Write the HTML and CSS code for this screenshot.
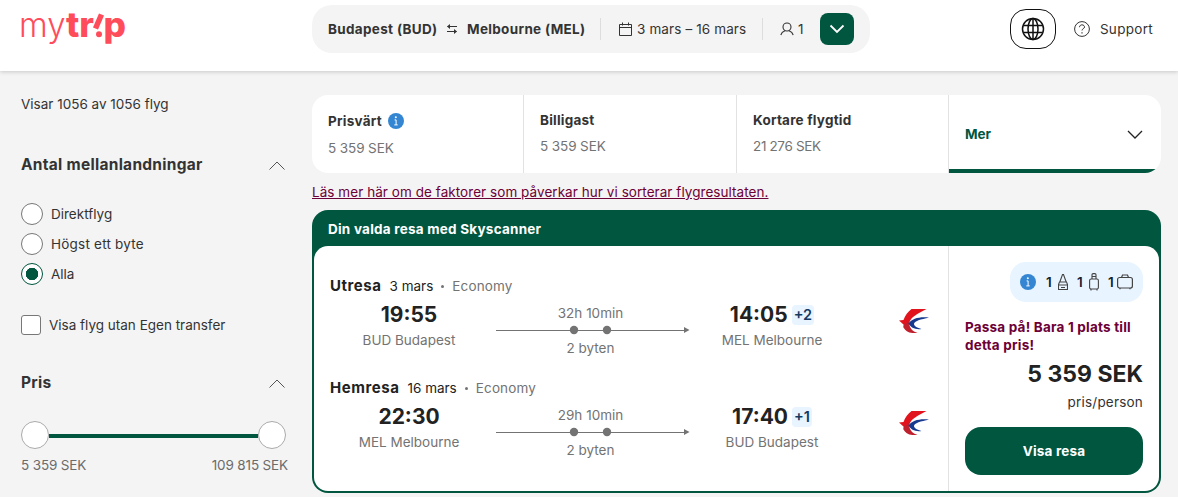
FILE: index.html
```html
<!DOCTYPE html>
<html lang="sv">
<head>
  <meta charset="UTF-8">
  <meta name="viewport" content="width=device-width, initial-scale=1.0">
  <title>Mytrip</title>
  <link rel="stylesheet" href="styles.css">
</head>
<body>

  <svg class="sprite" width="0" height="0">
    <symbol id="info" viewBox="0 0 16 16">
      <circle cx="8" cy="8" r="8" fill="#3486d2"/>
      <circle cx="7.8" cy="4.3" r="1" fill="#fff"/>
      <path d="M6.6 6.9h1.500v4.800M6.300 11.900h3.400" fill="none" stroke="#fff" stroke-width="1"/>
    </symbol>
    <symbol id="china-eastern" viewBox="0 0 30 24">
      <path d="M12.500 0H27.500L21 3.500C16 6 10.500 10 10 15L4.500 18.500 5 16 0 11.500 4.500 11C6 6.500 9 2.500 12.500 0z" fill="#e1141e"/>
      <path d="M4.500 16L10.200 12c-.7 6 3 10.500 8.300 11.700C11 25 6.500 22.500 4.500 18.500z" fill="#c01f2c"/>
      <path d="M30 8.700C21 7.500 13 9.500 9.500 14.500c2 4 7 6.500 13 5.500-4-1-7.500-2.800-7.500-5C15 12.200 22 10 30 8.700z" fill="#173a8f"/>
    </symbol>
    <symbol id="route" viewBox="0 0 194 10">
      <path d="M0 5.500H189" stroke="#737373" stroke-width="1"/>
      <circle cx="78" cy="5" r="4.200" fill="#737373"/>
      <circle cx="111" cy="5" r="4.200" fill="#737373"/>
      <path d="M188 2l5.500 3-5.500 3z" fill="#737373"/>
    </symbol>
  </svg>

  <header class="header">
    <svg class="logo" width="106" height="36" viewBox="0 0 106 36">
      <text class="logo-light" x="-2" y="26" textLength="46.500" lengthAdjust="spacingAndGlyphs">my</text>
      <text class="logo-bold" x="45" y="26" textLength="28" lengthAdjust="spacingAndGlyphs">tr</text>
      <path class="logo-mark" d="M80.500 3.500L74.500 17.500"/>
      <circle class="logo-dot" cx="78" cy="23.300" r="3"/>
      <text class="logo-bold" x="82.500" y="26" textLength="22.500" lengthAdjust="spacingAndGlyphs">p</text>
    </svg>

    <div class="search">
      <b class="city from">Budapest (BUD)</b>
      <svg width="12" height="12" viewBox="0 0 12 12" fill="none" stroke="#333" stroke-width="1.100"><path d="M11 3.500H1.500M1 8.500h9.500"/><path d="M4 1L1 3.500 4 6zM8 6l3 2.500L8 11z" fill="#333" stroke="none"/></svg>
      <b class="city to">Melbourne (MEL)</b>
      <div class="dates">
        <svg width="13" height="14" viewBox="0 0 13 14" fill="none" stroke="#333" stroke-width="1"><path d="M.5 2.500h12v11H.5zM.5 5.500h12M3.500 .5v3M9.500 .5v3"/></svg>
        <span>3 mars – 16 mars</span>
      </div>
      <div class="people">
        <svg width="14" height="14" viewBox="0 0 14 14" fill="none" stroke="#333" stroke-width="1.100"><circle cx="7" cy="5" r="4"/><path d="M.8 13C1.500 10.500 3 9.500 5 8.800M13.200 13C12.500 10.500 11 9.500 9 8.800"/></svg>
        <span>1</span>
      </div>
      <button class="search-btn">
        <svg width="16" height="10" viewBox="0 0 16 10" fill="none" stroke="#fff" stroke-width="1.800"><path d="M1.500 1.500L8 8l6.500-6.500"/></svg>
      </button>
    </div>

    <button class="globe">
      <svg width="24" height="24" viewBox="0 0 24 24" fill="none" stroke="#111" stroke-width="1.500"><circle cx="12" cy="12" r="10.500"/><ellipse cx="12" cy="12" rx="5" ry="10.500"/><path d="M12 1.500v21M2.500 8.500h19M2.500 15.500h19"/></svg>
    </button>
    <a class="support">
      <svg width="16" height="16" viewBox="0 0 16 16" fill="none" stroke="#333" stroke-width="1"><circle cx="8" cy="8" r="7.400"/><path d="M5.500 6.200C5.500 3 10.500 3.200 10.500 6c0 1.800-2.500 1.700-2.500 3.500"/><path d="M8 11.200v1.200" stroke-width="1.200"/></svg>
      <span>Support</span>
    </a>
  </header>

  <div class="page">
    <aside class="sidebar">
      <p class="count">Visar 1056 av 1056 flyg</p>

      <div class="filter-head">
        <h2>Antal mellanlandningar</h2>
        <svg width="16" height="9" viewBox="0 0 16 9" fill="none" stroke="#555" stroke-width="1"><path d="M.5 8.500L8 1l7.500 7.500"/></svg>
      </div>
      <label class="option"><span class="radio"></span><span>Direktflyg</span></label>
      <label class="option"><span class="radio"></span><span class="one-stop">Högst ett byte</span></label>
      <label class="option"><span class="radio checked"></span><span>Alla</span></label>
      <label class="option check-option"><span class="checkbox"></span><span>Visa flyg utan Egen transfer</span></label>

      <div class="filter-head price-head">
        <h2>Pris</h2>
        <svg width="16" height="9" viewBox="0 0 16 9" fill="none" stroke="#555" stroke-width="1"><path d="M.5 8.500L8 1l7.500 7.500"/></svg>
      </div>
      <div class="slider">
        <span class="handle"></span>
        <span class="track"></span>
        <span class="handle"></span>
      </div>
      <div class="range">
        <span>5 359 SEK</span>
        <span>109 815 SEK</span>
      </div>
    </aside>

    <main class="main">
      <div class="tabs">
        <div class="tab">
          <div class="tab-title with-info">Prisvärt <svg width="16" height="16"><use href="#info"/></svg></div>
          <div class="tab-price">5 359 SEK</div>
        </div>
        <div class="tab">
          <div class="tab-title">Billigast</div>
          <div class="tab-price">5 359 SEK</div>
        </div>
        <div class="tab">
          <div class="tab-title">Kortare flygtid</div>
          <div class="tab-price narrow">21 276 SEK</div>
        </div>
        <div class="tab more">
          <span>Mer</span>
          <svg width="16" height="9" viewBox="0 0 16 9" fill="none" stroke="#222" stroke-width="1.300"><path d="M1 1l7 7 7-7"/></svg>
        </div>
      </div>

      <a class="sort-link">Läs mer här om de faktorer som påverkar hur vi sorterar flygresultaten.</a>

      <section class="trip">
        <div class="trip-head">Din valda resa med Skyscanner</div>
        <div class="trip-body">
          <div class="legs">
            <div class="leg">
              <div class="leg-head"><b>Utresa</b><span>3 mars</span><i></i><span class="cabin">Economy</span></div>
              <div class="leg-row">
                <div class="stop"><strong>19:55</strong><span>BUD Budapest</span></div>
                <div class="route"><span>32h 10min</span><svg width="194" height="10"><use href="#route"/></svg><span>2 byten</span></div>
                <div class="stop arrive"><div><strong>14:05</strong><em>+2</em></div><span>MEL Melbourne</span></div>
                <svg class="airline" width="30" height="24"><use href="#china-eastern"/></svg>
              </div>
            </div>
            <div class="leg">
              <div class="leg-head"><b>Hemresa</b><span>16 mars</span><i></i><span class="cabin">Economy</span></div>
              <div class="leg-row">
                <div class="stop"><strong>22:30</strong><span>MEL Melbourne</span></div>
                <div class="route"><span>29h 10min</span><svg width="194" height="10"><use href="#route"/></svg><span>2 byten</span></div>
                <div class="stop arrive"><div><strong>17:40</strong><em>+1</em></div><span>BUD Budapest</span></div>
                <svg class="airline" width="30" height="24"><use href="#china-eastern"/></svg>
              </div>
            </div>
          </div>

          <div class="offer">
            <div class="bags">
              <svg class="bag-info" width="16" height="16"><use href="#info"/></svg>
              <span>1</span>
              <svg class="small-bag" width="10" height="18" viewBox="0 0 10 18" fill="none" stroke="#444" stroke-width="1.100"><path d="M1.800 9L4.500 1.500h1L8.200 9M1.500 9h7l1 2.500v5h-9v-5zM.5 12h9M3 14.500h4"/></svg>
              <span>1</span>
              <svg class="small-bag" width="10" height="18" viewBox="0 0 10 18" fill="none" stroke="#444" stroke-width="1.100"><path d="M3 6V1.800c0-.7.5-1.200 1.200-1.200h1.600C6.500.6 7 1.100 7 1.800V6M3 3.500h4"/><rect x=".6" y="6" width="8.800" height="10" rx="1.500"/><path d="M2 17.500V16M8 17.500V16"/></svg>
              <span>1</span>
              <svg class="suitcase" width="16" height="16" viewBox="0 0 16 16" fill="none" stroke="#444" stroke-width="1.200"><path d="M4.500 3.500L5.500 1h5l1 2.500M3 15.300V14M13 15.300V14"/><rect x=".6" y="3.500" width="14.800" height="10.500" rx="2"/></svg>
            </div>
            <p class="hurry">Passa på! Bara 1 plats till detta pris!</p>
            <div class="price">5 359 SEK</div>
            <div class="per">pris/person</div>
            <button class="show-btn">Visa resa</button>
          </div>
        </div>
      </section>
    </main>
  </div>

</body>
</html>
```

FILE: styles.css
```css
* {
  box-sizing: border-box;
}
body {
  margin: 0;
  height: 497px;
  overflow: hidden;
  background-color: #f4f4f4;
  color: #333;
  font-family: Inter, sans-serif;
  font-size: 13.5px;
  line-height: 20px;
}
svg {
  display: block;
  flex: none;
}
.sprite {
  position: absolute;
}
button {
  border: none;
  padding: 0;
  font-family: inherit;
  cursor: pointer;
}
p, h2 {
  margin: 0;
}

/* header */
.header {
  display: flex;
  align-items: center;
  height: 71px;
  padding: 0 25px 13px 21px;
  background-color: white;
  box-shadow: 0 1px 4px rgba(0, 0, 0, 0.18);
}
.logo {
  margin-right: 185px;
  overflow: visible;
  font-size: 34px;
  fill: #ff4c5b;
}
.logo-light {
  font-weight: 300;
}
.logo-bold {
  font-weight: 800;
}
.logo-mark {
  stroke: #ff4c5b;
  stroke-width: 5.500;
}
.search {
  display: flex;
  align-items: center;
  width: 558px;
  height: 48px;
  padding: 0 16px;
  border-radius: 20px;
  background-color: #f4f4f4;
}
.city {
  letter-spacing: 0.33px;
  white-space: nowrap;
}
.from {
  width: 118px;
}
.to {
  width: 133px;
  margin-left: 9px;
}
.dates, .people {
  display: flex;
  align-items: center;
  height: 22px;
  border-left: 1px solid #ddd;
}
.dates {
  width: 162px;
  padding-left: 18px;
  gap: 5px;
  letter-spacing: 0.12px;
  white-space: nowrap;
}
.people {
  width: 58px;
  padding-left: 17px;
  gap: 4px;
}
.search-btn {
  display: flex;
  align-items: center;
  justify-content: center;
  width: 34px;
  height: 32px;
  border-radius: 8px;
  background-color: #00563f;
}
.globe {
  display: flex;
  align-items: center;
  justify-content: center;
  width: 46px;
  height: 40px;
  margin-left: 140px;
  border: 1.500px solid #111;
  border-radius: 16px;
  background-color: white;
}
.support {
  display: flex;
  align-items: center;
  gap: 10px;
  margin-left: 18px;
  letter-spacing: 0.3px;
}

/* filters */
.page {
  display: flex;
  gap: 24px;
  padding: 24px 17px 0 21px;
}
.sidebar {
  width: 267px;
}
.count {
  height: 56px;
  line-height: 18px;
}
.filter-head {
  display: flex;
  align-items: center;
  justify-content: space-between;
  height: 28px;
  padding-right: 3px;
}
h2 {
  font-size: 15.5px;
  letter-spacing: 0.28px;
  line-height: 28px;
}
.filter-head + .option {
  margin-top: 20px;
}
.option {
  display: flex;
  align-items: center;
  gap: 8px;
  height: 30px;
}
.one-stop {
  letter-spacing: 0.22px;
}
.radio {
  width: 22px;
  height: 22px;
  border: 1px solid #777;
  border-radius: 50%;
  background-color: white;
}
.radio.checked {
  border-color: #00563f;
  background: radial-gradient(circle, #00563f 6px, white 6.500px);
}
.check-option {
  margin-top: 21px;
}
.checkbox {
  width: 20px;
  height: 20px;
  border: 1px solid #777;
  border-radius: 3px;
  background-color: white;
}
.price-head {
  margin-top: 29px;
}
.slider {
  display: flex;
  align-items: center;
  width: 265px;
  margin-top: 24px;
}
.handle {
  width: 28px;
  height: 28px;
  border: 1px solid #aaa;
  border-radius: 50%;
  background-color: white;
}
.track {
  flex: 1;
  height: 4px;
  margin-top: 2px;
  background-color: #00563f;
}
.range {
  display: flex;
  justify-content: space-between;
  margin-top: 6px;
  color: #6b6b6b;
  letter-spacing: -0.15px;
}

/* sort tabs */
.main {
  width: 849px;
}
.tabs {
  display: grid;
  grid-template-columns: 212px 213px 212px 1fr;
  height: 78px;
  border-radius: 16px;
  overflow: hidden;
  background-color: white;
}
.tab {
  padding: 15px 16px 0;
  border-right: 1px solid #e2e2e2;
}
.tab-title {
  font-weight: 700;
  letter-spacing: 0.22px;
}
.with-info {
  display: flex;
  align-items: center;
  gap: 6px;
  padding-top: 1px;
}
.with-info + .tab-price {
  margin-top: 7px;
}
.tab-price {
  margin-top: 6px;
  color: #737373;
  letter-spacing: -0.1px;
}
.narrow {
  letter-spacing: -0.35px;
}
.more {
  display: flex;
  align-items: center;
  justify-content: space-between;
  padding-top: 4px;
  padding-right: 18px;
  border-right: none;
  border-bottom: 4px solid #00563f;
  color: #00563f;
  font-weight: 700;
}
.sort-link {
  display: block;
  height: 37px;
  padding-top: 9px;
  color: #6d0036;
  letter-spacing: 0.055px;
  text-decoration: underline;
  white-space: nowrap;
}

/* trip card */
.trip {
  height: 283px;
  padding: 0 2px 2px;
  border-radius: 16px;
  background-color: #00563f;
}
.trip-head {
  height: 36px;
  padding: 9px 14px 0;
  color: white;
  font-weight: 700;
  letter-spacing: 0.23px;
}
.trip-body {
  display: flex;
  height: 245px;
  border-radius: 14px;
  background-color: white;
}
.legs {
  width: 635px;
  padding: 30px 16px 0;
  border-right: 1px solid #e2e2e2;
}
.leg {
  height: 102px;
}
.leg-head {
  display: flex;
  align-items: center;
  height: 20px;
  color: #222;
}
.leg-head b {
  margin-right: 8px;
  font-size: 15px;
  letter-spacing: 0.55px;
}
.leg-head i {
  width: 3px;
  height: 3px;
  margin: 0 8px;
  border-radius: 50%;
  background-color: #737373;
}
.leg-head .cabin {
  color: #737373;
  letter-spacing: 0.15px;
}
.leg-row {
  display: flex;
}
.stop {
  display: flex;
  flex-direction: column;
  align-items: center;
  width: 158px;
  padding-top: 5px;
  color: #737373;
}
.stop strong {
  color: #222;
  font-size: 21px;
  line-height: 28px;
}
.stop span {
  line-height: 22px;
}
.arrive > div {
  display: flex;
  align-items: center;
  gap: 4px;
  height: 28px;
}
.arrive em {
  padding: 0 2px;
  border-radius: 4px;
  background-color: #e8f4ff;
  color: #15395f;
  font-size: 14.5px;
  font-style: normal;
  font-weight: 600;
}
.route {
  display: flex;
  flex-direction: column;
  align-items: center;
  width: 194px;
  margin: 6px 3px 0 8px;
  padding-top: 1px;
  color: #737373;
}
.route svg {
  margin: 2px 0 3px;
}
.route span {
  margin-right: 5px;
  line-height: 20px;
}
.airline {
  margin: 13px 0 0 48px;
}

/* price column */
.offer {
  width: 210px;
  padding: 16px 16px 0;
}
.bags {
  display: flex;
  align-items: center;
  width: 133px;
  height: 40px;
  margin-left: auto;
  padding: 0 10px;
  border-radius: 16px;
  background-color: #e8f4ff;
  color: #15202c;
  font-weight: 600;
}
.bag-info {
  margin-right: 10px;
}
.small-bag {
  margin: 0 9px 0 7px;
}
.bags .small-bag + span + .suitcase {
  margin-left: auto;
}
.bags span {
  width: 5px;
}
.hurry {
  margin-top: 16px;
  color: #6d0036;
  font-weight: 700;
  letter-spacing: 0.2px;
  line-height: 18px;
}
.price {
  margin-top: 4px;
  color: #222;
  font-size: 23px;
  font-weight: 650;
  line-height: 32px;
  text-align: right;
}
.per {
  margin-top: 2px;
  letter-spacing: 0.2px;
  text-align: right;
}
.show-btn {
  width: 178px;
  height: 48px;
  margin-top: 15px;
  border-radius: 16px;
  background-color: #00563f;
  color: white;
  font-size: 13.5px;
  font-weight: 700;
  letter-spacing: 0.2px;
}
```
